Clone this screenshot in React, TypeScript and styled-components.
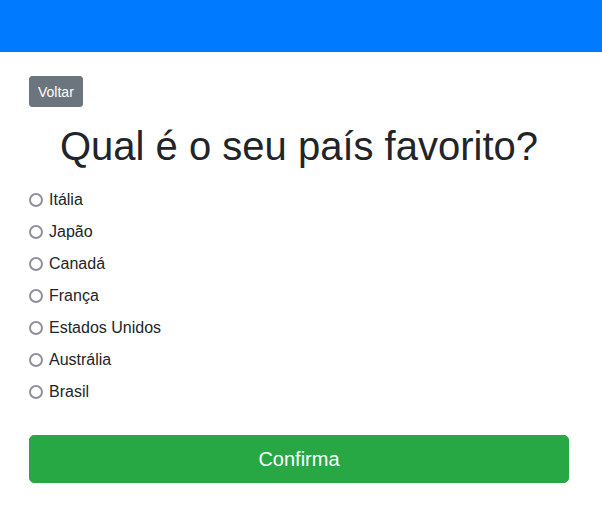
import React, { useState } from 'react'
import styled, { createGlobalStyle } from 'styled-components'

const GlobalStyle = createGlobalStyle`
body {
	margin: 0;
	font-family: "Liberation Sans", Arial, sans-serif;
	color: #212529;
	background: #fff;
}
`

const Header = styled.header`
height: 52px;
background: #007bff;
`

const Main = styled.main`
padding: 24px 33px 0 29px;
`

const BackButton = styled.button`
display: inline-block;
font-family: inherit;
font-size: 14px;
line-height: 21px;
padding: 5px 8px 3px;
color: #fff;
background: #6c757d;
border: 1px solid #6c757d;
border-radius: 3px;
cursor: pointer;
`

const Title = styled.h1`
margin: 15px 0 18px;
font-size: 40px;
font-weight: 400;
line-height: 48px;
text-align: center;
`

const Options = styled.div`
display: flex;
flex-direction: column;
gap: 8px;
`

const Option = styled.label`
display: flex;
align-items: center;
gap: 6px;
font-size: 16px;
line-height: 24px;
cursor: pointer;
`

const Radio = styled.span<{ $checked: boolean }>`
width: 14px;
height: 14px;
box-sizing: border-box;
border-radius: 50%;
border: 2px solid ${p => (p.$checked ? '#007bff' : '#8f8f9d')};
background: ${p => (p.$checked ? 'radial-gradient(circle, #007bff 0 3px, #fff 3.5px)' : '#fff')};
`

const ConfirmButton = styled.button`
display: block;
width: 100%;
margin-top: 31px;
font-family: inherit;
font-size: 20px;
line-height: 30px;
padding: 8px 16px;
color: #fff;
background: #28a745;
border: 1px solid #28a745;
border-radius: 5px;
cursor: pointer;
`

const countries = ['Itália', 'Japão', 'Canadá', 'França', 'Estados Unidos', 'Austrália', 'Brasil']

export default function App() {
	const [selected, setSelected] = useState<string | null>(null)
	return (
		<>
			<GlobalStyle />
			<Header />
			<Main>
				<BackButton>Voltar</BackButton>
				<Title>Qual é o seu país favorito?</Title>
				<Options>
					{countries.map(c => (
						<Option key={c} onClick={() => setSelected(c)}>
							<Radio $checked={selected === c} />
							{c}
						</Option>
					))}
				</Options>
				<ConfirmButton>Confirma</ConfirmButton>
			</Main>
		</>
	)
}
